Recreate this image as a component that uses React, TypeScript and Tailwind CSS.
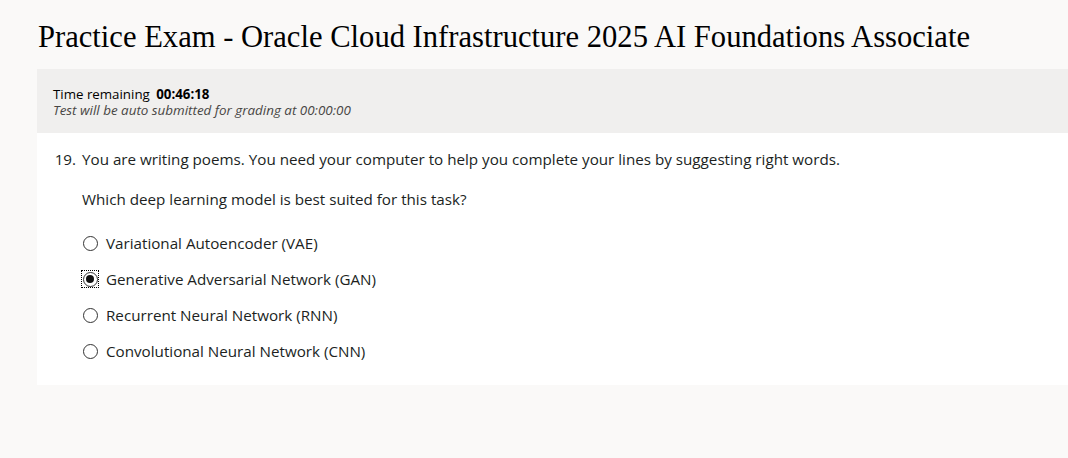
import { useState } from "react";

const options = [
  "Variational Autoencoder (VAE)",
  "Generative Adversarial Network (GAN)",
  "Recurrent Neural Network (RNN)",
  "Convolutional Neural Network (CNN)",
];

export default function App() {
  const [selected, setSelected] = useState(1);

  return (
    <div className="min-h-[458px] bg-[#faf9f8] text-[#201f1e] font-['Open_Sans',sans-serif]">
      <h1 className="pl-[38px] pt-[20px] pb-[14px] text-[30.6px] leading-[35px] text-[#000] font-['Liberation_Serif',serif]">
        Practice Exam - Oracle Cloud Infrastructure 2025 AI Foundations Associate
      </h1>

      <div className="ml-[37px]">
        <div className="bg-[#f0efee] h-[64px] pl-[16px] pt-[17px]">
          <div className="text-[13.3px] leading-[16px] text-[#000]">
            Time remaining <span className="font-bold ml-[3px]">00:46:18</span>
          </div>
          <div className="text-[13.4px] leading-[16px] italic text-[#484644]">
            Test will be auto submitted for grading at 00:00:00
          </div>
        </div>

        <div className="bg-white h-[252px] pt-[16px] text-[15.2px] leading-[20px]">
          <div className="flex">
            <span className="w-[45px] text-right pr-[6px]">19.</span>
            <span>
              You are writing poems. You need your computer to help you complete your lines by suggesting right words.
            </span>
          </div>
          <p className="pl-[45px] mt-[20px]">Which deep learning model is best suited for this task?</p>

          <div className="pl-[45px] mt-[24px] flex flex-col gap-[16px]">
            {options.map((opt, i) => (
              <label key={opt} className="flex items-center gap-[7px] h-[20px] cursor-pointer" onClick={() => setSelected(i)}>
                <span
                  className={
                    i === selected
                      ? "w-[18px] h-[18px] -ml-[1px] flex items-center justify-center border border-dotted border-black"
                      : "w-[18px] h-[18px] -ml-[1px] flex items-center justify-center border border-transparent"
                  }
                >
                  <span className="w-[15px] h-[15px] rounded-full border-[1.5px] border-[#333] flex items-center justify-center bg-white">
                    {i === selected && <span className="w-[8px] h-[8px] rounded-full bg-[#111]" />}
                  </span>
                </span>
                <span>{opt}</span>
              </label>
            ))}
          </div>
        </div>
      </div>
    </div>
  );
}
